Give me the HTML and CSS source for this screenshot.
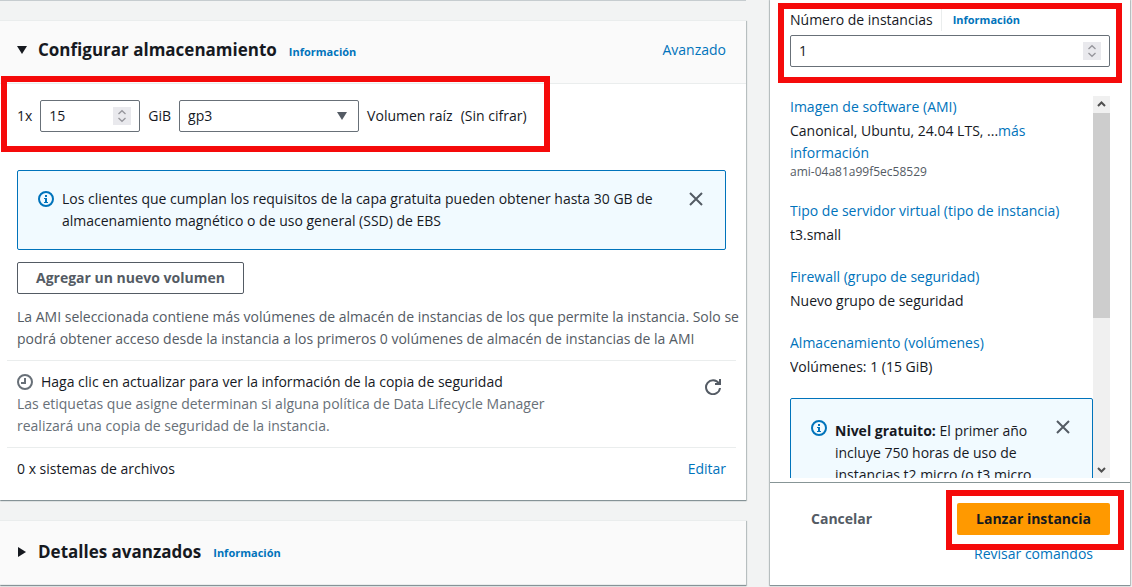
FILE: index.html
```html
<!DOCTYPE html>
<html lang="es">
<head>
<meta charset="utf-8">
<title>Lanzar una instancia</title>
<link rel="stylesheet" href="styles.css">
</head>
<body>
<div class="page">
  <main class="main">
    <section class="card-previous" aria-hidden="true"></section>

    <section class="card">
      <header class="card-header">
        <svg class="caret" width="10" height="8" viewBox="0 0 10 8" aria-hidden="true"><path d="M0 0h10L5 8z" fill="#16191f"/></svg>
        <h2 class="title">Configurar almacenamiento</h2>
        <a class="info" href="#">Información</a>
        <a class="push" href="#">Avanzado</a>
      </header>
      <div class="card-body">
        <div class="volume">
          <div class="highlight highlight-volume"></div>
          <label for="size">1x</label>
          <span class="field field-size">
            <input id="size" type="number" value="15">
            <svg class="spinner" width="18" height="18" viewBox="0 0 18 18" aria-hidden="true"><path d="M0 0h18v18H0z" fill="#e9e9ed"/><path d="M5.500 7 9 3.700 12.500 7M5.500 11 9 14.300 12.500 11" fill="none" stroke="#96969c" stroke-width="1.300"/></svg>
          </span>
          <label for="type">GiB</label>
          <span class="field field-type">
            <select id="type"><option>gp3</option></select>
            <svg class="arrow" width="10" height="8" viewBox="0 0 10 8" aria-hidden="true"><path d="M0 0h10L5 8z" fill="#545b64"/></svg>
          </span>
          <span>Volumen raíz</span>
          <span>(Sin cifrar)</span>
        </div>

        <div class="alert">
          <svg class="icon" width="16" height="16" viewBox="0 0 16 16" aria-hidden="true"><circle cx="8" cy="8" r="7" fill="none" stroke="#0073bb" stroke-width="2"/><path d="M7 4h2v2H7zM6 7h3v4h1v1H6v-1h1V8H6z" fill="#0073bb"/></svg>
          <p class="alert-text">Los clientes que cumplan los requisitos de la capa gratuita pueden obtener hasta 30 GB de almacenamiento magnético o de uso general (SSD) de EBS</p>
          <button class="icon-button" type="button" aria-label="Cerrar"><svg width="14" height="14" viewBox="0 0 14 14"><path d="m1 1 12 12M13 1 1 13" stroke="#545b64" stroke-width="2"/></svg></button>
        </div>

        <button class="button" type="button">Agregar un nuevo volumen</button>
        <p class="note">La AMI seleccionada contiene más volúmenes de almacén de instancias de los que permite la instancia. Solo se podrá obtener acceso desde la instancia a los primeros 0 volúmenes de almacén de instancias de la AMI</p>
      </div>

      <div class="row">
        <div class="backup">
          <p class="backup-title"><svg width="16" height="16" viewBox="0 0 16 16" aria-hidden="true"><circle cx="8" cy="8" r="7" fill="none" stroke="#687078" stroke-width="2"/><path d="M8 4v5H4" fill="none" stroke="#687078" stroke-width="2"/></svg>Haga clic en actualizar para ver la información de la copia de seguridad</p>
          <p class="muted">Las etiquetas que asigne determinan si alguna política de Data Lifecycle Manager realizará una copia de seguridad de la instancia.</p>
        </div>
        <button class="icon-button refresh" type="button" aria-label="Actualizar"><svg width="16" height="16" viewBox="0 0 16 16"><path d="M13.800 4.200A7 7 0 1 0 15 9M15 0v5h-5" fill="none" stroke="#545b64" stroke-width="2"/></svg></button>
      </div>
      <div class="row row-last">
        <span>0 x sistemas de archivos</span>
        <a href="#">Editar</a>
      </div>
    </section>

    <section class="card">
      <header class="card-header card-header-collapsed">
        <svg class="caret" width="10" height="10" viewBox="0 0 10 10" aria-hidden="true"><path d="M1 0v10l8-5z" fill="#16191f"/></svg>
        <h2 class="title">Detalles avanzados</h2>
        <a class="info" href="#">Información</a>
      </header>
    </section>
  </main>

  <aside class="summary">
    <div class="count">
      <div class="highlight highlight-count"></div>
      <div class="count-label">
        <label for="count">Número de instancias</label>
        <a class="info count-info" href="#">Información</a>
      </div>
      <span class="field">
        <input id="count" type="number" value="1">
        <svg class="spinner" width="18" height="18" viewBox="0 0 18 18" aria-hidden="true"><path d="M0 0h18v18H0z" fill="#e9e9ed"/><path d="M5.500 7 9 3.700 12.500 7M5.500 11 9 14.300 12.500 11" fill="none" stroke="#96969c" stroke-width="1.300"/></svg>
      </span>
    </div>

    <div class="scroller">
      <div class="details">
        <div class="item">
          <a href="#">Imagen de software (AMI)</a>
          <p>Canonical, Ubuntu, 24.04 LTS, ...<a href="#">más información</a></p>
          <small class="ami">ami-04a81a99f5ec58529</small>
        </div>
        <div class="item">
          <a href="#">Tipo de servidor virtual (tipo de instancia)</a>
          <p>t3.small</p>
        </div>
        <div class="item">
          <a href="#">Firewall (grupo de seguridad)</a>
          <p>Nuevo grupo de seguridad</p>
        </div>
        <div class="item">
          <a href="#">Almacenamiento (volúmenes)</a>
          <p>Volúmenes: 1 (15 GiB)</p>
        </div>
        <div class="alert alert-small">
          <svg class="icon" width="16" height="16" viewBox="0 0 16 16" aria-hidden="true"><circle cx="8" cy="8" r="7" fill="none" stroke="#0073bb" stroke-width="2"/><path d="M7 4h2v2H7zM6 7h3v4h1v1H6v-1h1V8H6z" fill="#0073bb"/></svg>
          <p class="alert-text"><b>Nivel gratuito:</b> El primer año incluye 750 horas de uso de instancias t2.micro (o t3.micro</p>
          <button class="icon-button" type="button" aria-label="Cerrar"><svg width="14" height="14" viewBox="0 0 14 14"><path d="m1 1 12 12M13 1 1 13" stroke="#545b64" stroke-width="2"/></svg></button>
        </div>
      </div>
      <div class="scrollbar" aria-hidden="true">
        <svg width="17" height="17" viewBox="0 0 17 17"><path d="m5 10 3.500-3.500L12 10" fill="none" stroke="#505050" stroke-width="2"/></svg>
        <div class="track"><div class="thumb"></div></div>
        <svg width="17" height="17" viewBox="0 0 17 17"><path d="m5 7 3.500 3.500L12 7" fill="none" stroke="#505050" stroke-width="2"/></svg>
      </div>
    </div>

    <footer class="footer">
      <button class="cancel" type="button">Cancelar</button>
      <div class="launch">
        <div class="highlight highlight-launch"></div>
        <button class="primary" type="button">Lanzar instancia</button>
        <a href="#">Revisar comandos</a>
      </div>
    </footer>
  </aside>
</div>
</body>
</html>
```
FILE: styles.css
```css
* { box-sizing: border-box; }

body {
  margin: 0;
  background: #f2f3f3;
  color: #16191f;
  font: 14px/22px "Open Sans", "Noto Sans", sans-serif;
}

h2, p { margin: 0; }
a { color: #0073bb; text-decoration: none; }
svg { display: block; flex: none; }
button, input, select { font: inherit; color: inherit; }

.page {
  display: grid;
  grid-template-columns: minmax(0, 1fr) 360px;
  gap: 24px;
  height: 100vh;
  padding-right: 2px;
  overflow: hidden;
}

.main {
  display: flex;
  flex-direction: column;
  gap: 20px;
}

.card {
  flex: none;
  background: #fff;
  border-top: 1px solid #eaeded;
  box-shadow: 0 1px 1px 0 rgba(0, 28, 36, 0.3), 1px 1px 1px 0 rgba(0, 28, 36, 0.2);
}

.card-previous {
  height: 1px;
  margin-bottom: -1px;
  background: #c6cccf;
}

.card-header {
  display: flex;
  align-items: center;
  height: 63px;
  padding: 0 20px 4px 17px;
  background: #fafafa;
  border-bottom: 1px solid #eaeded;
}

.card-header-collapsed { height: 64px; padding-bottom: 2px; }

.caret { margin-right: 11px; }
.title { font-size: 17px; line-height: 22px; font-weight: 700; }

.info {
  margin: 3px 0 0 12px;
  font-size: 11px;
  font-weight: 700;
}

.push { margin-left: auto; }

.card-body { padding: 16px 20px 10px 17px; }

.volume {
  position: relative;
  display: flex;
  align-items: center;
  gap: 8px;
  width: fit-content;
  margin-bottom: 38px;
}

.highlight {
  position: absolute;
  z-index: 2;
  border: 6px solid #f50a0a;
  pointer-events: none;
}

.highlight-volume { inset: -24px -23px -20px -16px; }
.highlight-count { inset: 3px 8px 0; }
.highlight-launch { inset: -13px -14px 15px -11px; }

.field {
  display: flex;
  align-items: center;
  height: 32px;
  padding: 0 8px;
  background: #fff;
  border: 1px solid #687078;
  border-radius: 2px;
}

.field input, .field select {
  flex: 1;
  min-width: 0;
  width: 100%;
  padding: 0;
  border: 0;
  outline: 0;
  background: none;
  appearance: none;
}

.field input { appearance: textfield; }
.field input::-webkit-inner-spin-button { appearance: none; }
.field-size { width: 100px; }
.field-type { width: 180px; }
.arrow { margin-right: 3px; }

.alert {
  display: flex;
  align-items: flex-start;
  padding: 17px 22px 17px 20px;
  background: #f1faff;
  border: 1px solid #0073bb;
  border-radius: 2px;
}

.icon { margin: 3px 8px 0 0; }
.alert-text { flex: 1; padding-right: 20px; }

.icon-button {
  display: grid;
  place-items: center;
  flex: none;
  height: 22px;
  padding: 0;
  border: 0;
  background: none;
}

.button {
  height: 32px;
  margin: 12px 0;
  padding: 0 18px;
  border: 1px solid #545b64;
  border-radius: 2px;
  background: #fff;
  color: #545b64;
  font-weight: 700;
}

.note { margin-right: -18px; color: #545b64; }

.row {
  display: flex;
  justify-content: space-between;
  margin: 0 10px 0 7px;
  padding: 10px;
  border-top: 1px solid #eaeded;
}

.row-last { padding-bottom: 20px; }
.backup { max-width: 560px; }
.backup-title { display: flex; align-items: center; gap: 8px; }
.muted { color: #687078; }
.refresh { margin: 5px 5px 0 0; }

.summary {
  display: flex;
  flex-direction: column;
  height: calc(100vh - 2px);
  background: #fff;
  box-shadow: 0 1px 1px 0 rgba(0, 28, 36, 0.3), 0 0 1px 1px rgba(0, 28, 36, 0.2);
}

.count { position: relative; padding: 9px 20px 16px; }
.count-label { display: flex; align-items: center; margin-bottom: 4px; }

.count-info {
  margin: 0 0 0 8px;
  padding-left: 11px;
  border-left: 1px solid #eaeded;
}

.scroller {
  display: flex;
  flex: 1;
  min-height: 0;
  margin: 13px 20px 4px;
  overflow: hidden;
}

.details { flex: 1; min-width: 0; }
.item { margin-bottom: 20px; }
.item > a { display: block; margin-bottom: 2px; }
.item p { max-width: 250px; }

.ami {
  display: block;
  color: #545b64;
  font-size: 12px;
  line-height: 16px;
}

.alert-small { padding-top: 21px; }
.alert-small .icon { margin-top: 0; }
.alert-small .icon-button { height: 14px; }

.scrollbar {
  display: flex;
  flex-direction: column;
  width: 17px;
  background: #f0f0f0;
}

.track { flex: 1; }
.thumb { height: 59%; background: #cdcdcd; }

.footer {
  display: flex;
  justify-content: space-between;
  align-items: flex-start;
  padding: 20px 20px 20px 41px;
  border-top: 1px solid #879596;
}

.cancel {
  height: 32px;
  padding: 0;
  border: 0;
  background: none;
  color: #545b64;
  font-weight: 700;
}

.launch {
  position: relative;
  display: flex;
  flex-direction: column;
  align-items: center;
  gap: 8px;
}

.primary {
  height: 32px;
  padding: 0 19px;
  border: 0;
  border-radius: 2px;
  background: #f90;
  font-weight: 700;
}
```
